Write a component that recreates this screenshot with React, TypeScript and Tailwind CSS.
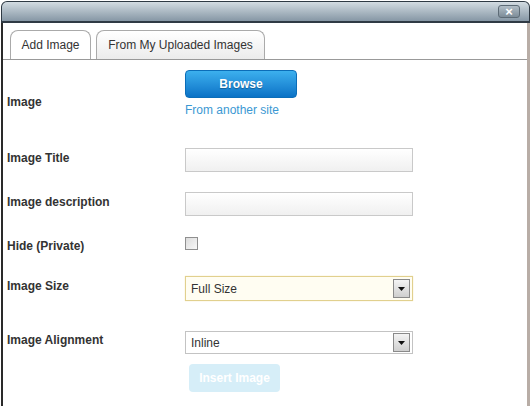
import React from 'react'

const font = { fontFamily: '"Liberation Sans", Arial, sans-serif' }

function Arrow() {
  return (
    <span className="flex h-[19px] w-[17px] items-center justify-center border border-[#8a8a8a] bg-gradient-to-b from-[#f4f4f4] to-[#cfcfcf]">
      <svg width="7" height="4" viewBox="0 0 7 4">
        <path d="M0 0h7L3.5 4z" fill="#111" />
      </svg>
    </span>
  )
}

export default function App() {
  return (
    <div className="h-[406px] w-[531px] overflow-hidden bg-white" style={font}>
      <div className="ml-[1px] mt-[1px] w-[529px]">
        {/* title bar */}
        <div className="flex h-[22px] items-center justify-end rounded-t-[6px] border border-b-2 border-[#2f3a44] bg-gradient-to-b from-[#d3dce2] to-[#8697a5] pr-[9px]">
          <span className="flex h-[13px] w-[22px] items-center justify-center rounded-[3px] border border-[#5d6b76] bg-gradient-to-b from-[#b2bec7] to-[#7d8c98] text-[13px] font-bold leading-none text-white">
            ×
          </span>
        </div>

        {/* body */}
        <div className="h-[384px] border-l-2 border-r-[3px] border-l-[#2a2a2a] border-r-[#b8ada6] text-[12px] text-[#333]">
          <div className="flex items-end gap-[5px] border-b border-[#999] pl-[7px] pt-[7px]">
            <div className="flex h-[29px] w-[81px] items-center justify-center rounded-t-[8px] border border-b-0 border-[#aaa] bg-white">
              Add Image
            </div>
            <div className="flex h-[29px] w-[169px] items-center justify-center rounded-t-[8px] border border-b-0 border-[#aaa] bg-gradient-to-b from-white to-[#ececec]">
              From My Uploaded Images
            </div>
          </div>

          <div className="pl-[4px] pt-[10px]">
            <div className="flex">
              <div className="w-[178px] pt-[23px] font-bold">Image</div>
              <div>
                <div className="flex h-[28px] w-[112px] items-center justify-center rounded-[4px] border border-[#0b6db8] bg-gradient-to-b from-[#3cb0ee] to-[#0a72c6] font-bold text-white [text-shadow:0_1px_1px_rgba(0,0,0,0.3)]">
                  Browse
                </div>
                <div className="mt-[5px] leading-[14px] text-[#3b98d3]">From another site</div>
              </div>
            </div>

            <div className="mt-[31px] flex items-start">
              <div className="w-[178px] pt-[3px] font-bold leading-[14px]">Image Title</div>
              <div className="h-[24px] w-[228px] border border-[#c9c9c9] bg-gradient-to-b from-white to-[#f0f0f0]" />
            </div>

            <div className="mt-[20px] flex items-start">
              <div className="w-[178px] pt-[3px] font-bold leading-[14px]">Image description</div>
              <div className="h-[24px] w-[228px] border border-[#c9c9c9] bg-gradient-to-b from-white to-[#f0f0f0]" />
            </div>

            <div className="mt-[21px] flex h-[13px] items-start">
              <div className="w-[178px] pt-[2px] font-bold leading-[14px]">Hide (Private)</div>
              <div className="h-[13px] w-[13px] border border-[#8f8f8f] bg-gradient-to-br from-[#dcdcdc] to-[#f8f8f8]" />
            </div>

            <div className="mt-[26px] flex items-start">
              <div className="w-[178px] pt-[3px] font-bold leading-[14px]">Image Size</div>
              <div className="flex h-[25px] w-[228px] items-center justify-between border border-[#e1d08e] bg-[#fffdf2] pl-[5px] pr-[2px] shadow-[0_0_1px_#f0e2a8]">
                <span>Full Size</span>
                <Arrow />
              </div>
            </div>

            <div className="mt-[30px] flex items-start">
              <div className="w-[178px] pt-[2px] font-bold leading-[14px]">Image Alignment</div>
              <div className="flex h-[23px] w-[228px] items-center justify-between border border-[#c3c3c3] bg-white pl-[5px] pr-[2px]">
                <span>Inline</span>
                <Arrow />
              </div>
            </div>

            <div className="mt-[10px] flex">
              <div className="ml-[182px] flex h-[28px] w-[91px] items-center justify-center rounded-[4px] bg-[#d6eef8] font-bold text-white">
                Insert Image
              </div>
            </div>
          </div>
        </div>
      </div>
    </div>
  )
}
